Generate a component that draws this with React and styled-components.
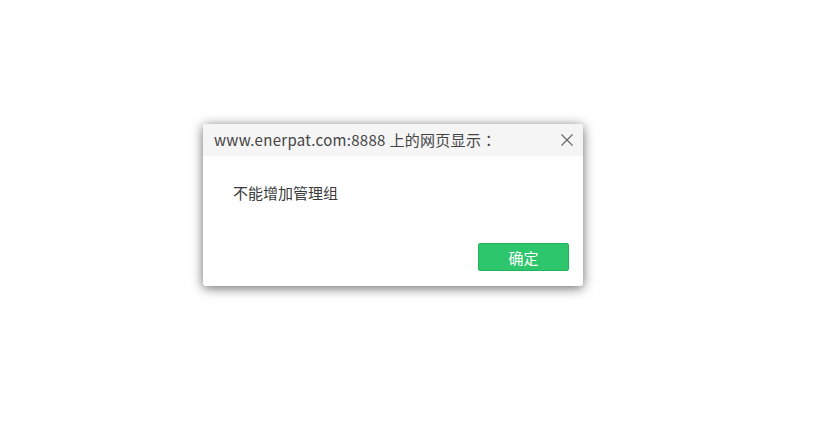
import React from "react";
import styled, { createGlobalStyle } from "styled-components";

const GlobalStyle = createGlobalStyle`
  body {
    margin: 0;
    background: #ffffff;
    font-family: "Noto Sans CJK SC", "Noto Sans", sans-serif;
  }
`;

const Page = styled.div`
  width: 823px;
  height: 444px;
  padding: 124px 0 0 203px;
  box-sizing: border-box;
`;

const Dialog = styled.div`
  width: 380px;
  height: 162px;
  background: #ffffff;
  border-radius: 3px;
  box-shadow: 0 2px 12px rgba(0, 0, 0, 0.6);
  display: flex;
  flex-direction: column;
  overflow: hidden;
`;

const Header = styled.div`
  height: 32px;
  background: #f5f5f5;
  display: flex;
  align-items: center;
  justify-content: space-between;
  padding: 0 9px 0 11px;
`;

const Title = styled.div`
  font-size: 15px;
  letter-spacing: 0.3px;
  color: #444444;
  line-height: 20px;
`;

// centred full-width colon, as the reference draws it
const Colon = styled.span`
  font-family: "Noto Sans CJK TC", sans-serif;
`;

const CloseBtn = styled.button`
  border: 0;
  background: none;
  padding: 0;
  width: 14px;
  height: 14px;
  display: flex;
  cursor: pointer;
`;

const Body = styled.div`
  flex: 1;
  display: flex;
  flex-direction: column;
  justify-content: space-between;
  padding: 27px 14px 15px 30px;
`;

const Message = styled.div`
  font-size: 15px;
  line-height: 20px;
  color: #3a3a3a;
`;

const Footer = styled.div`
  display: flex;
  justify-content: flex-end;
`;

const OkButton = styled.button`
  width: 91px;
  height: 28px;
  background: #2ec66d;
  border: 1px solid #21b45c;
  border-radius: 2px;
  color: #ffffff;
  font-family: "Noto Sans CJK SC", sans-serif;
  font-size: 15px;
  cursor: pointer;
`;

export default function App() {
  return (
    <>
      <GlobalStyle />
      <Page>
        <Dialog>
          <Header>
            <Title>
              www.enerpat.com:8888 上的网页显示<Colon>：</Colon>
            </Title>
            <CloseBtn>
              <svg width="14" height="14" viewBox="0 0 14 14">
                <path d="M1.5 1.5L12.5 12.5M12.5 1.5L1.5 12.5" stroke="#666" strokeWidth="1.2" />
              </svg>
            </CloseBtn>
          </Header>
          <Body>
            <Message>不能增加管理组</Message>
            <Footer>
              <OkButton>确定</OkButton>
            </Footer>
          </Body>
        </Dialog>
      </Page>
    </>
  );
}
